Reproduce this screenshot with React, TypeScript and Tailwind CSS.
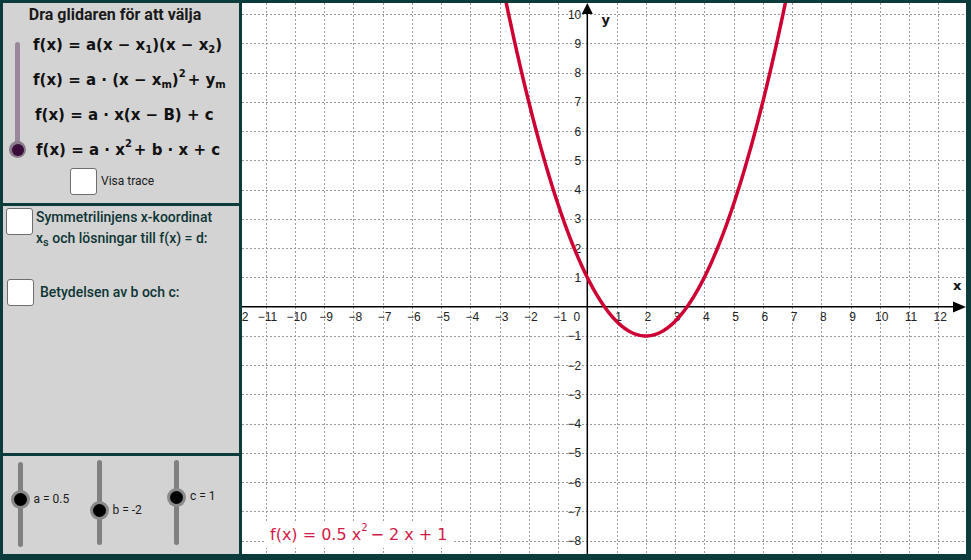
import React from 'react';

const U = 29.25;
const OX = 345.3;
const OY = 303.7;
const W = 724;
const H = 551;

const fx = (x: number) => 0.5 * x * x - 2 * x + 1;

function Checkbox({ className = '' }: { className?: string }) {
  return (
    <div className={`w-[27px] h-[27px] bg-white border border-[#6e6e6e] rounded-[3px] shrink-0 ${className}`} />
  );
}

function VSlider({ top, height, knob, label, labelDy = 0 }: { top: number; height: number; knob: number; label: string; labelDy?: number }) {
  return (
    <div className="relative w-[5px] rounded-full bg-[#808080] shrink-0" style={{ marginTop: top, height }}>
      <div
        className="absolute left-[-7px] w-[19px] h-[19px] rounded-full bg-[#8a8a8a] flex items-center justify-center"
        style={{ top: knob - 9.5 }}
      >
        <div className="w-[13px] h-[13px] rounded-full bg-black" />
      </div>
      <div
        className="absolute left-[16px] whitespace-nowrap text-[12px] leading-[14px] text-[#1a1a1a] font-['Roboto',sans-serif]"
        style={{ top: knob - 7 + labelDy }}
      >
        {label}
      </div>
    </div>
  );
}

function Formula({ children }: { children: React.ReactNode }) {
  return (
    <div className="h-[35px] flex items-center whitespace-nowrap text-[15px] font-bold text-[#111] font-['DejaVu_Sans',sans-serif]">
      {children}
    </div>
  );
}

const Sub = ({ children }: { children: React.ReactNode }) => (
  <span className="text-[10px] relative top-[4px]">{children}</span>
);
const Sup = ({ children }: { children: React.ReactNode }) => (
  <span className="text-[10px] relative top-[-7px] mr-[2px]">{children}</span>
);

function Graph() {
  const vk: number[] = [];
  for (let k = -12; k <= 12; k++) vk.push(k);
  const hk: number[] = [];
  for (let k = -8; k <= 10; k++) hk.push(k);

  const pts: string[] = [];
  for (let x = -2.9; x <= 6.9; x += 0.05) {
    pts.push(`${(OX + x * U).toFixed(2)},${(OY - fx(x) * U).toFixed(2)}`);
  }

  return (
    <svg width={W} height={H} className="block" style={{ overflow: 'hidden' }}>
      <g stroke="#9a9a9a" strokeWidth={1} strokeDasharray="2 2" shapeRendering="crispEdges">
        {vk.filter((k) => k !== 0).map((k) => {
          const x = Math.round(OX + k * U) + 0.5;
          return <line key={`v${k}`} x1={x} y1={0} x2={x} y2={H} />;
        })}
        {hk.filter((k) => k !== 0).map((k) => {
          const y = Math.round(OY - k * U) + 0.5;
          return <line key={`h${k}`} x1={0} y1={y} x2={W} y2={y} />;
        })}
      </g>
      <g fontFamily="'Liberation Sans', Arial, sans-serif" fontSize={12} fill="#222">
        {vk.filter((k) => k !== 0).map((k) => (
          <text key={`xl${k}`} x={OX + k * U + 2} y={OY + 14.5} textAnchor="middle">
            {k < 0 ? `\u2212${-k}` : k}
          </text>
        ))}
        {hk.filter((k) => k !== 0).map((k) => (
          <text key={`yl${k}`} x={OX - 6} y={OY - k * U + 4.5} textAnchor="end">
            {k < 0 ? `\u2212${-k}` : k}
          </text>
        ))}
        <text x={OX - 7} y={OY + 14.5} textAnchor="end">0</text>
      </g>
      <g stroke="#000" strokeWidth={1.5}>
        <line x1={0} y1={OY} x2={712} y2={OY} />
        <line x1={OX} y1={10} x2={OX} y2={H} />
      </g>
      <polygon points={`711,298.5 724,304 711,309.5`} fill="#000" />
      <polygon points={`${OX},0 ${OX - 5.5},11 ${OX + 5.5},11`} fill="#000" />
      <text x={359.5} y={21} fontFamily="'DejaVu Sans', sans-serif" fontWeight="bold" fontSize={13} fill="#111">y</text>
      <text x={711} y={287} fontFamily="'DejaVu Sans', sans-serif" fontWeight="bold" fontSize={13} fill="#111">x</text>
      <polyline points={pts.join(' ')} fill="none" stroke="#cc0033" strokeWidth={3.5} strokeLinejoin="round" />
    </svg>
  );
}

export default function App() {
  return (
    <div className="w-[971px] h-[560px] bg-[#0b3b3b] flex pt-[3px] pl-[3px] pr-[5px] pb-[6px] gap-[3px] overflow-hidden">
      {/* left column */}
      <div className="w-[236px] flex flex-col gap-[3px] shrink-0">
        <div className="h-[200px] bg-[#d3d3d3] flex flex-col">
          <div className="pt-[2px] h-[22px] leading-[20px] text-center pr-[12px] text-[16px] font-bold text-[#1a1a1a] font-['Roboto',sans-serif]">
            Dra glidaren för att välja
          </div>
          <div className="flex mt-[2.5px]">
            <div className="relative w-[30px] shrink-0">
              <div className="absolute left-[12px] top-[14px] w-[5px] h-[109px] rounded-full bg-[#9a889a]" />
              <div className="absolute left-[6px] top-[113.5px] w-[17px] h-[17px] rounded-full bg-[#8a7a8a] flex items-center justify-center">
                <div className="w-[12px] h-[12px] rounded-full bg-[#3a0c3a]" />
              </div>
            </div>
            <div className="flex flex-col">
              <Formula>f(x) = a(x − x<Sub>1</Sub>)(x − x<Sub>2</Sub>)</Formula>
              <Formula>f(x) = a · (x − x<Sub>m</Sub>)<Sup>2</Sup> + y<Sub>m</Sub></Formula>
              <div className="pl-[2px]"><Formula>f(x) = a · x(x − B) + c</Formula></div>
              <div className="pl-[3px]"><Formula>f(x) = a · x<Sup>2</Sup> + b · x + c</Formula></div>
            </div>
          </div>
          <div className="flex items-center pl-[67px]">
            <Checkbox />
            <span className="ml-[4px] text-[12px] text-[#1a1a1a] font-['Roboto',sans-serif]">Visa trace</span>
          </div>
        </div>

        <div className="h-[247px] bg-[#d3d3d3] flex flex-col font-['Roboto',sans-serif] text-[#0e3535] font-medium text-[14px]">
          <div className="flex items-start pl-[3px] pt-[2px]">
            <Checkbox />
            <div className="ml-[3px] leading-[21px] mt-[-1.5px]">
              <div>Symmetrilinjens x-koordinat</div>
              <div>
                x<span className="relative top-[3px] text-[11px]">s</span> och lösningar till f(x) = d:
              </div>
            </div>
          </div>
          <div className="flex items-center pl-[4px] mt-[29px]">
            <Checkbox />
            <span className="ml-[6px]">Betydelsen av b och c:</span>
          </div>
        </div>

        <div className="flex-1 bg-[#d3d3d3] flex items-start">
          <div className="ml-[14.5px]">
            <VSlider top={6} height={85} knob={37} label="a = 0.5" />
          </div>
          <div className="ml-[74px]">
            <VSlider top={4} height={85} knob={50} label="b = -2" />
          </div>
          <div className="ml-[72.5px]">
            <VSlider top={4} height={85} knob={37} label="c = 1" labelDy={-1} />
          </div>
        </div>
      </div>

      {/* graph */}
      <div className="relative w-[724px] bg-white overflow-hidden">
        <Graph />
        <div className="absolute left-[24px] top-[519px] h-[26px] px-[4px] bg-white flex items-center text-[16px] leading-[26px] text-[#d21a4a] font-['DejaVu_Sans',sans-serif] whitespace-nowrap">
          f(x) = 0.5 x<span className="text-[10px] relative top-[-7px] mr-[3px]">2</span> − 2 x + 1
        </div>
      </div>
    </div>
  );
}
